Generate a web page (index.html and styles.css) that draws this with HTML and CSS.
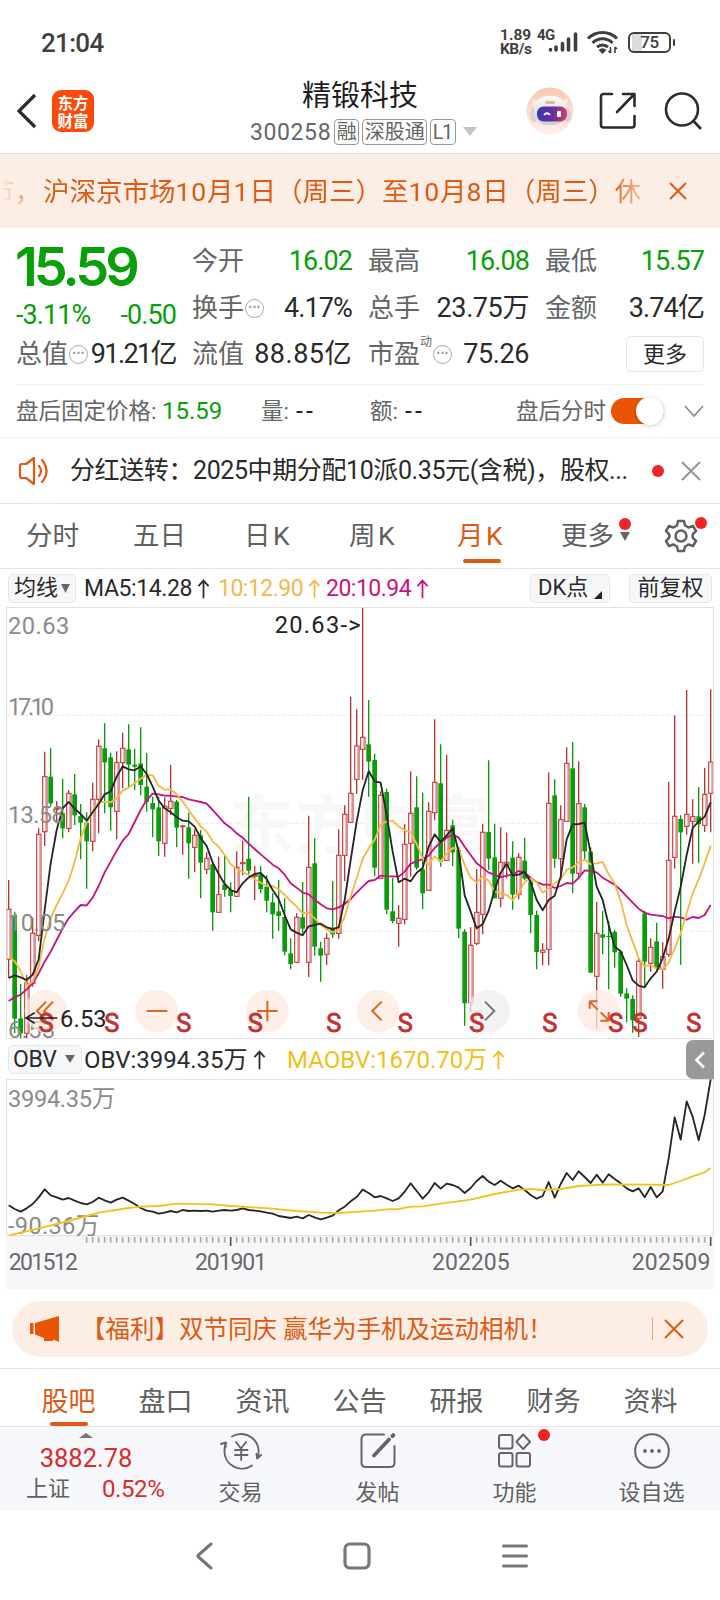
FILE: index.html
```html
<!DOCTYPE html>
<html lang="zh-CN">
<head>
<meta charset="utf-8">
<title>精锻科技 300258</title>
<link rel="stylesheet" href="styles.css">
</head>
<body>
<div class="screen">
  <div class="status">
    <span class="clock">21:04</span>
    <span class="speed"><b>1.89</b><b>KB/s</b></span>
    <span class="net">4G</span>
    <svg class="signal" width="31" height="22" viewBox="0 0 31 22"><g fill="none" stroke="#3f3f3f" stroke-width="3.6" stroke-linecap="round"><path d="M2.5 18.5v.5M8 16v3M14.500 12.500V19M20.500 8v11M27.500 3v16"/></g></svg>
    <svg class="wifi" width="34" height="24" viewBox="0 0 34 24"><g fill="none" stroke="#3f3f3f" stroke-width="3"><path d="M2 8.500a20.500 20.500 0 0 1 29 0M6.500 13a14 14 0 0 1 20 0M11 17.200a8 8 0 0 1 11 0"/></g><path d="M12.500 20q4-3.500 8 0L16.500 24z" fill="#3f3f3f"/><path d="M24.500 17v6m-2-2 2 2M29 23v-6m2 2-2-2" stroke="#3f3f3f" stroke-width="1.600" fill="none"/></svg>
    <span class="battery">75</span>
  </div>

  <div class="header">
    <svg class="back" width="22" height="36" viewBox="0 0 22 36"><path d="M19 2 3 18l16 16" fill="none" stroke="#2c2c2c" stroke-width="3.200"/></svg>
    <div class="logo"><span>东方</span><span>财富</span></div>
    <div class="title">
      <div class="name">精锻科技</div>
      <div class="code"><span class="num">300258</span><i>融</i><i>深股通</i><i class="lv">L1</i><svg width="14" height="10"><path d="M0 0h14L7 9z" fill="#c4c4c4"/></svg></div>
    </div>
    <svg class="robot" width="48" height="48" viewBox="0 0 48 48">
      <defs><linearGradient id="halo" x2="0" y2="1"><stop offset="0" stop-color="#fbc8ac"/><stop offset="1" stop-color="#fff1ea"/></linearGradient>
      <linearGradient id="visor"><stop offset="0" stop-color="#3b36b0"/><stop offset=".55" stop-color="#6a2f9e"/><stop offset="1" stop-color="#d8405e"/></linearGradient>
      <linearGradient id="shell" x2="0" y2="1"><stop offset="0" stop-color="#fafafa"/><stop offset="1" stop-color="#cfcfd6"/></linearGradient></defs>
      <circle cx="24" cy="24" r="23.500" fill="url(#halo)"/>
      <path d="M6 12l7 2-5 8zM42 12l-7 2 5 8z" fill="#f1eeee"/>
      <ellipse cx="8" cy="28" rx="4" ry="7" fill="#d4d3da"/><ellipse cx="41" cy="28" rx="4" ry="7" fill="#d4d3da"/>
      <rect x="8" y="9" width="32" height="29" rx="13" fill="url(#shell)"/>
      <rect x="19" y="14" width="10" height="3" rx="1.500" fill="#e8b48f"/>
      <rect x="11" y="19.500" width="30" height="15" rx="6.500" fill="url(#visor)"/>
      <path d="M18 28q3-3.500 6 0" fill="none" stroke="#fff" stroke-width="1.800"/><rect x="31" y="24" width="4" height="6" rx="1" fill="#fff"/>
    </svg>
    <svg class="share" width="38" height="38" viewBox="0 0 38 38"><g fill="none" stroke="#2c2c2c" stroke-width="2.600" stroke-linecap="round" stroke-linejoin="round"><path d="M13 2H4.500Q2 2 2 4.500V33q0 2.500 2.500 2.500H33q2.500 0 2.500-2.500V24M24 2h11.500v12M35 2.500 18 20"/></g></svg>
    <svg class="search" width="38" height="38" viewBox="0 0 38 38"><circle cx="18" cy="17.500" r="16" fill="none" stroke="#2c2c2c" stroke-width="2.600"/><path d="m29 28.500 8 8.500" stroke="#2c2c2c" stroke-width="2.600"/></svg>
  </div>

  <div class="notice">
    <div class="marquee"><span class="lead">节，</span><span class="run">沪深京市场<em class="mq">10</em>月<em class="mq">1</em>日（周三）至<em class="mq">10</em>月<em class="mq">8</em>日（周三）休</span></div>
    <svg width="18" height="18"><path d="M1 1l16 16M17 1 1 17" stroke="#dc5a14" stroke-width="2"/></svg>
  </div>

  <div class="quote">
    <div class="price">
      <div class="last">15.59</div>
      <div class="chg"><span>-3.11%</span><span>-0.50</span></div>
    </div>
    <div class="cell c2"><span>今开</span><b class="g">16.02</b></div>
    <div class="cell c3"><span>最高</span><b class="g">16.08</b></div>
    <div class="cell c4"><span>最低</span><b class="g">15.57</b></div>
    <div class="cell c2 r2"><span>换手</span><i class="tip">···</i><b class="n">4.17%</b></div>
    <div class="cell c3 r2"><span>总手</span><b>23.75万</b></div>
    <div class="cell c4 r2"><span>金额</span><b class="n">3.74亿</b></div>
    <div class="cell c1 r3"><span>总值</span><i class="tip">···</i><b>91.21亿</b></div>
    <div class="cell c2 r3"><span>流值</span><b class="w">88.85亿</b></div>
    <div class="cell c3 r3"><span>市盈</span><sup>动</sup><i class="tip">···</i><b>75.26</b></div>
    <div class="more r3">更多</div>
  </div>

  <div class="after">
    <span class="a1">盘后固定价格:</span><span class="a2">15.59</span><span class="a3">量:</span><span class="dash">--</span><span class="a4">额:</span><span class="dash">--</span>
    <span class="a5">盘后分时</span><span class="toggle"></span>
    <svg width="20" height="13"><path d="M1 1l9 10 9-10" fill="none" stroke="#8a8a8a" stroke-width="1.600"/></svg>
  </div>

  <div class="news">
    <svg width="34" height="28" viewBox="0 0 34 28"><g fill="none" stroke="#dc5a14" stroke-width="2.200" stroke-linejoin="round" stroke-linecap="round"><path d="M2 9v10q0 2 2 2h4l8 6V1L8 7H4Q2 7 2 9zM21 9q4 5 0 10M24 3q9 11 0 22"/></g></svg>
    <span class="txt">分红送转：2025中期分配10派0.35元(含税)，股权...</span>
    <span class="dot"></span>
    <svg class="x" width="20" height="20"><path d="M1 1l18 18M19 1 1 19" stroke="#949494" stroke-width="2"/></svg>
  </div>

  <div class="periods">
    <span>分时</span><span>五日</span><span class="kk">日<em>K</em></span><span class="kk">周<em>K</em></span><span class="kk on">月<em>K</em></span><span class="pm">更多<svg width="10" height="9"><path d="M0 0h10L5 9z" fill="#666"/></svg><u class="dot"></u></span>
    <span class="gear"><svg width="34" height="34" viewBox="0 0 34 34"><g fill="none" stroke="#606060" stroke-width="2.500" stroke-linejoin="round"><path d="M14 2h6l1 4.500 3.500 2 4.500-1.500 3 5-3.300 3.300v3.400L32 22l-3 5-4.500-1.500-3.500 2L20 32h-6l-1-4.500-3.500-2L5 27l-3-5 3.300-3.300v-3.400L2 12l3-5 4.500 1.500 3.500-2z"/><circle cx="17" cy="17" r="5.500"/></g></svg><u class="dot"></u></span>
  </div>

  <div class="ind">
    <span class="chip k1">均线<svg width="9" height="9"><path d="M0 0h9L4.500 9z" fill="#666"/></svg></span>
    <span class="m1">MA5:14.28<svg class="up" viewBox="0 0 14 22"><path d="M7 21V2M1.500 8 7 2l5.500 6"/></svg></span>
    <span class="m2">10:12.90<svg class="up" viewBox="0 0 14 22"><path d="M7 21V2M1.500 8 7 2l5.500 6"/></svg></span>
    <span class="m3">20:10.94<svg class="up" viewBox="0 0 14 22"><path d="M7 21V2M1.500 8 7 2l5.500 6"/></svg></span>
    <span class="chip k2">DK点<svg width="8" height="8"><path d="M8 0v8H0z" fill="#222"/></svg></span>
    <span class="chip k3">前复权</span>
  </div>

  <svg class="kline" id="kline" viewBox="0 21 2160 1296"></svg>

  <div class="obvbar">
    <span class="chip">OBV<svg width="10" height="8"><path d="M0 0h10L5 8z" fill="#666"/></svg></span>
    <span class="o1">OBV:3994.35万<svg class="up" viewBox="0 0 14 22"><path d="M7 21V2M1.500 8 7 2l5.500 6"/></svg></span>
    <span class="o2">MAOBV:1670.70万<svg class="up" viewBox="0 0 14 22"><path d="M7 21V2M1.500 8 7 2l5.500 6"/></svg></span>
    <span class="side"><svg width="12" height="18"><path d="M10 1.500 2.500 9l7.500 7.500" fill="none" stroke="#fff" stroke-width="2.600"/></svg></span>
  </div>
  <svg class="obv" id="obv" viewBox="0 147 2160 630"></svg>

  <div class="promo">
    <svg width="30" height="26" viewBox="0 0 30 26"><path d="M0 7h3.500v11H0zM5 7 29 0v26l-6-2.500v1.500h-9v-3L5 18.500z" fill="#ea5504"/></svg>
    <span class="txt">【福利】双节同庆 赢华为手机及运动相机！</span>
    <i></i>
    <svg width="20" height="20"><path d="M1 1l18 18M19 1 1 19" stroke="#dc5a14" stroke-width="2"/></svg>
  </div>

  <div class="tabs"><span class="on">股吧</span><span>盘口</span><span>资讯</span><span>公告</span><span>研报</span><span>财务</span><span>资料</span></div>

  <div class="bottom">
    <div class="index">
      <svg class="caret" width="14" height="5"><path d="M0 5 7 0l7 5z" fill="#777"/></svg>
      <div class="v">3882.78</div>
      <div class="s"><span>上证</span><b>0.52%</b></div>
    </div>
    <div class="act"><svg width="42" height="38" viewBox="0 0 42 38"><g fill="none" stroke="#666" stroke-width="1.900" stroke-linecap="round" stroke-linejoin="round"><path d="M12 4.500A17.500 17.500 0 0 1 38 24l-.8 2.500M41.200 23l-4 3.500-.7-4.500M32 33.500A17.500 17.500 0 0 1 4.500 18q0-4 1.500-7.500M1 12l5-1.500-.5 5"/><path d="m16 10 5 6.500 5-6.500M15 18h12.500M15 23h12.500M21.200 17v11"/></g></svg><span>交易</span></div>
    <div class="act"><svg width="38" height="38" viewBox="0 0 38 38"><g fill="none" stroke="#666" stroke-linecap="round"><path d="M25 2.500H7Q2.500 2.500 2.500 7v23.500q0 4.500 4.500 4.500h24q4.500 0 4.500-4.500V14" stroke-width="2"/><path d="M15 23.500 30 7.500" stroke-width="3.800"/><path d="m33.500 4 .8-.8" stroke-width="4"/></g></svg><span>发帖</span></div>
    <div class="act"><svg width="36" height="36" viewBox="0 0 36 36"><g fill="none" stroke="#666" stroke-width="2"><rect x="2" y="2" width="13.500" height="13.500" rx="2"/><rect x="2" y="20" width="13.500" height="13.500" rx="2"/><rect x="19.500" y="20" width="13.500" height="13.500" rx="2"/><path d="M26.200 1.500 33 8.800l-6.800 7.300-6.800-7.300z" stroke-linejoin="round"/></g></svg><u class="dot"></u><span>功能</span></div>
    <div class="act"><svg width="38" height="38" viewBox="0 0 38 38"><circle cx="19" cy="19" r="16.800" fill="none" stroke="#666" stroke-width="2"/><g fill="#666"><circle cx="12" cy="19" r="1.900"/><circle cx="19" cy="19" r="1.900"/><circle cx="26" cy="19" r="1.900"/></g></svg><span>设自选</span></div>
  </div>

  <div class="nav">
    <svg width="20" height="30" viewBox="0 0 20 30"><path d="M17 3 4.500 14q-1.200 1 0 2L17 27" fill="none" stroke="#777" stroke-width="3" stroke-linecap="round"/></svg>
    <svg width="30" height="30" viewBox="0 0 30 30"><rect x="3" y="3" width="24" height="24" rx="5" fill="none" stroke="#777" stroke-width="3.200"/></svg>
    <svg width="28" height="30" viewBox="0 0 28 30"><path d="M2.500 5h23M2.500 15h23M2.500 25h23" stroke="#777" stroke-width="3" stroke-linecap="round"/></svg>
  </div>
</div>
<script src="chart.js"></script>
</body>
</html>
```
FILE: chart.js
```js
// Monthly candles, 2015-12 to 2025-09: direction, high, body top, body bottom, low (chart units).
const candles = `R 840 928 1078 1134;G 935 945 1256 1300;G 1152 1255 1300 1318;R 1125 1150 1300 1315;R 953 1000 1150 1160;R 685 703 1006 1024;R 455 530 695 738;G 444 530 610 618;R 603 625 628 668;G 536 640 685 715;R 571 580 685 697;G 522 583 646 675;G 612 648 668 778;G 637 668 724 866;R 548 598 724 754;R 418 439 598 700;G 370 445 487 640;G 458 472 622 692;R 454 488 634 718;R 398 445 488 565;G 373 448 494 560;G 446 494 500 570;G 382 490 555 586;G 459 560 606 635;G 590 609 628 712;G 590 622 724 768;R 592 619 730 770;R 495 604 625 645;G 600 605 683 742;R 675 678 680 764;G 638 682 730 836;R 688 706 742 817;G 690 706 788 895;R 757 775 808 823;G 790 793 937 992;R 770 884 937 937;G 768 853 870 890;G 847 870 888 937;R 754 802 889 889;
R 722 788 791 826;G 590 776 812 823;R 797 826 829 900;G 799 824 867 880;G 826 860 902 937;G 880 907 943 1016;G 840 934 948 992;G 895 951 1055 1066;G 1015 1060 1092 1108;R 940 952 1087 1090;G 846 952 986 1000;R 647 802 1087 1131;G 715 790 1040 1067;G 1025 1045 1067 1145;R 1000 1015 1063 1095;G 843 985 1003 1015;R 688 766 1000 1016;R 616 643 766 843;R 290 580 667 667;R 328 438 538 582;R 22 412 448 540;G 300 433 485 590;G 461 480 803 829;R 574 586 835 835;G 566 576 929 943;G 833 934 963 970;R 916 955 970 1040;R 673 733 958 973;R 514 640 730 830;G 529 622 803 809;G 578 808 880 928;R 607 634 871 871;R 358 547 638 661;G 433 550 785 800;R 464 691 781 781;G 659 676 757 799;G 740 750 986 1015;G 988 995 1210 1277;R 982 1036 1208 1235;R 806 937 1030 1036;
R 672 697 943 1003;G 481 696 776 810;G 671 772 895 895;R 682 787 895 922;R 698 787 796 835;G 724 773 884 929;R 760 772 883 898;G 713 782 836 840;G 840 845 945 1000;G 932 945 1056 1108;R 1030 1051 1057 1096;R 517 610 1048 1096;G 538 586 776 803;R 616 659 776 830;R 442 490 664 664;G 426 505 821 880;R 484 611 820 835;G 612 622 754 779;G 742 755 1118 1118;R 905 1000 1129 1286;G 932 1003 1013 1063;G 963 1008 1010 1168;G 990 996 1057 1103;G 1052 1055 1181 1190;G 1165 1180 1196 1267;G 1186 1197 1261 1298;R 1075 1084 1255 1311;G 932 940 1085 1160;R 1015 1042 1090 1115;G 968 1024 1105 1110;R 1027 1070 1108 1166;R 545 781 1063 1070;R 346 649 772 806;G 646 657 697 1094;R 270 643 679 704;R 598 650 664 791;G 561 649 673 788;R 503 583 676 696;R 268 486 580 697`
  .split(';').map(s => s.trim().split(' '));

const ma5 = [1134,1126,1132,1140,1124,1078,930,790,690,625,606,626,642,662,637,612,583,574,530,499,508,511,499,522,560,602,625,637,651,662,664,680,714,738,788,822,852,870,877,
850,832,822,819,837,870,897,945,988,998,1006,979,975,971,982,987,982,900,780,665,571,514,544,548,645,755,847,836,844,818,804,740,703,726,706,685,755,886,935,985,
973,932,870,818,791,826,824,815,846,900,931,900,887,830,718,673,672,668,760,860,900,975,1040,1054,1095,1141,1157,1162,1135,1115,1075,1015,935,860,765,684,664,650,607];
const ma10 = [1072,1084,1113,1156,1145,1100,1015,955,915,880,842,785,715,668,634,605,606,607,596,572,563,549,536,524,526,557,569,569,583,605,630,655,679,695,724,740,765,793,806,
816,825,838,848,858,858,868,885,903,920,939,939,955,975,988,997,990,950,889,835,777,745,720,674,665,662,680,690,697,732,775,794,769,785,761,744,746,795,833,847,
830,842,875,880,885,900,880,845,836,846,878,865,850,838,809,802,787,779,793,790,786,823,850,903,975,1025,1075,1100,1095,1105,1109,1088,1045,1000,940,880,838,790,737];
const ma20 = [1203,1192,1184,1168,1150,1120,1085,1055,1020,985,955,934,915,916,893,858,817,785,752,722,702,666,630,600,581,583,587,587,590,591,598,602,606,611,630,650,670,683,700,
713,731,747,763,778,794,805,824,850,863,878,883,899,913,925,928,922,912,897,878,860,843,840,827,829,829,830,815,791,784,777,767,744,727,713,704,713,740,765,790,
803,818,824,832,827,824,813,817,834,846,854,854,864,858,849,851,834,811,813,817,833,844,854,870,889,908,926,938,944,946,948,955,950,952,959,951,954,945,915];
const obv = [526,537,545,535,522,502,478,496,502,509,504,512,519,523,516,503,511,518,509,503,512,522,534,542,545,551,548,543,547,540,543,542,543,542,545,542,540,542,540,535,540,542,544,548,551,558,561,564,560,565,555,562,568,563,557,541,530,514,501,
479,489,502,498,505,513,505,485,460,483,506,487,459,476,461,465,473,489,474,453,438,455,465,452,464,475,467,480,495,506,498,456,503,462,429,450,424,441,459,434,458,433,447,460,475,484,475,502,471,502,484,385,262,329,214,260,331,255,148];
const maobv = '28,616 116,595 206,573 296,548 386,534 422,530 476,528 530,521 638,523 692,528 728,530 818,536 890,543 962,548 1016,549 1080,545 1124,542 1160,538 1196,537 1232,530 1268,529 1322,521 1412,509 1484,492 1556,479 1592,477 1628,480 1682,477 1736,468 1826,463 1952,464 2006,465 2042,453 2078,439 2114,427 2132,414';

const xAt = i => 26 + 18 * i;
const line = (vals, cls) =>
  `<polyline class="${cls}" points="${vals.map((v, i) => xAt(i) + ',' + v).join(' ')}"/>`;
const label = (x, y, w, text, cls) =>
  `<text x="${x}" y="${y}" textLength="${w}" class="${cls}">${text}</text>`;

let k = '';
[346, 670, 994].forEach(y => k += `<path class="grid" d="M20 ${y}H2140"/>`);
'东方财富'.split('').forEach((c, i) => k += `<text class="mark" x="${690 + i * 196}" y="745">${c}</text>`);
candles.forEach(([dir, h, t, b, l], i) => {
  const x = xAt(i);
  if (dir === 'G') {
    k += `<path class="gw" d="M${x} ${h}V${l}"/><rect class="gb" x="${x - 7}" y="${t}" width="14" height="${Math.max(3, b - t)}"/>`;
  } else {
    k += `<path class="rw" d="M${x} ${h}V${t}M${x} ${b}V${l}"/><rect class="rb" x="${x - 6}" y="${t}" width="13" height="${Math.max(1, b - t)}"/>`;
    if (b - t > 12) k += `<path class="rs" d="M${x + 4} ${+t + 2}V${b - 2}"/>`;
  }
});
k += line(ma20, 'l20') + line(ma10, 'l10') + line(ma5, 'l5');
k += label(24, 102, 184, '20.63', 'ax') + label(24, 346, 138, '17.10', 'ax') + label(24, 670, 170, '13.58', 'ax')
   + label(24, 994, 172, '10.05', 'ax') + label(24, 1313, 142, '6.53', 'ax');
[138, 470, 802, 1134, 1466, 1797].forEach((x, i) => k += `<circle class="${i === 4 ? 'btn off' : 'btn'}" cx="${x}" cy="1233" r="64"/>`);
k += `<g class="ico"><path d="m138 1205-27 28 27 28M159 1205l-27 28 27 28M440 1233h62M771 1233h62M802 1202v62M1145 1205l-28 28 28 28"/>
<path d="M1769 1226v-22M1768 1204h24M1769 1205l24 24M1826 1236v26M1827 1262h-26M1826 1261l-24-24"/><path d="m1455 1205 28 28-28 28" style="stroke:#777"/></g>`;
[138, 335, 551, 766, 1001, 1216, 1430, 1649, 1847, 1920, 2081].forEach(x => k += `<text class="sell" x="${x}" y="1297">S</text>`);
k += label(824, 98, 258, '20.63-&gt;', 'hl') + label(180, 1282, 140, '6.53', 'hl')
   + '<path d="M172 1254H78M104 1238 78 1254l26 16" class="arrow"/>';
k += '<path class="frame" d="M20 22H2140V1316H20z"/>';
document.getElementById('kline').innerHTML = k;

let o = '<rect x="18" y="617" width="2124" height="160" fill="#f7f7fa"/>';
for (let i = 13; i < 118; i++) {
  const major = i === 37 || i === 77 || i === 117;
  o += `<path class="${major ? 'tick major' : 'tick'}" d="M${xAt(i)} 621V${major ? 648 : 638}"/>`;
}
o += '<path class="frame" d="M20 148H2140V617H20z"/>';
o += label(24, 232, 322, '3994.35万', 'ax') + label(24, 611, 274, '-90.36万', 'ax');
o += line(obv, 'lobv') + `<polyline class="lmaobv" points="${maobv}"/>`;
o += label(26, 719, 208, '201512', 'dt') + label(585, 719, 216, '201901', 'dt')
   + label(1296, 719, 233, '202205', 'dt') + label(1895, 719, 236, '202509', 'dt');
document.getElementById('obv').innerHTML = o;
```
FILE: styles.css
```css
* { box-sizing: border-box; }
body { margin: 0; background: #fff; }
b, i, u, em { font-weight: 400; font-style: normal; text-decoration: none; }
svg { display: block; flex: none; }
.screen {
  width: 720px; height: 1600px; overflow: hidden; background: #fff;
  font-family: Roboto, "Noto Sans CJK SC", sans-serif; color: #2a2a2a; line-height: 1; white-space: nowrap;
}
.dot { width: 12px; height: 12px; border-radius: 50%; background: #f02424; }
.up { display: inline-block; width: 13px; height: 22px; fill: none; stroke: currentColor; stroke-width: 1.9; }

.status { height: 76px; display: flex; align-items: center; padding: 8px 45px 0 41px; color: #3f3f3f; }
.clock { font-size: 26px; font-weight: 500; letter-spacing: -.7px; flex: 1; padding-top: 1px; }
.speed { display: grid; font-size: 15.500px; width: 37px; }
.speed b { font-weight: 700; line-height: 14px; }
.speed b + b { letter-spacing: -.5px; }
.net { font-size: 15px; font-weight: 700; align-self: flex-start; margin: 20px 0 0; width: 11px; letter-spacing: -.5px; }
.signal { margin-top: 0; margin-right: 7px; }
.wifi { margin-right: 8px; }
.battery {
  width: 43px; height: 21px; border: 2.500px solid #3f3f3f; border-radius: 6px; margin-right: 4px;
  font-size: 17px; font-weight: 500; display: flex; justify-content: center; align-items: center; position: relative;
  background: linear-gradient(90deg, #fff 2px, #ddd 2px 12px, #fff 12px); letter-spacing: -.5px;
}
.battery::after { content: ""; position: absolute; right: -6px; top: 5px; width: 2.500px; height: 7px; background: #3f3f3f; border-radius: 1px; }

.header { height: 78px; border-bottom: 1.500px solid #dedede; display: flex; align-items: center; padding: 0 18px 7px 16px; }
.logo {
  width: 42px; height: 42px; margin-left: 14px; border-radius: 9px; background: #fb4a0c; color: #fff;
  font: 700 15.500px/18px "Noto Sans CJK SC", sans-serif; display: grid; align-content: center; justify-content: center;
}
.title { margin-left: 156px; width: 220px; height: 66px; }
.name { font-size: 29px; line-height: 36px; text-align: center; color: #1f1f1f; }
.code { display: flex; align-items: center; height: 30px; color: #666; font-size: 23px; margin-top: 3px; gap: 3px; }
.code .num { width: 82px; letter-spacing: .6px; }
.code i { border: 1px solid #999; border-radius: 4px; height: 26px; line-height: 24px; padding: 0 1.500px; font-size: 20px; }
.code .lv { letter-spacing: -1.500px; padding-right: 3px; }
.code svg { margin-left: 4px; }
.robot { margin-left: 56px; }
.share { margin-left: 25px; }
.search { margin-left: auto; }

.notice { height: 74px; background: #fdeee5; color: #dc5a14; display: flex; align-items: center; padding-right: 33px; justify-content: space-between; }
.marquee { width: 646px; overflow: hidden; display: flex; font-size: 26.500px; line-height: 40px; padding-top: 1px;
  -webkit-mask-image: linear-gradient(90deg, transparent, #000 50px 610px, transparent 655px); mask-image: linear-gradient(90deg, transparent, #000 50px 610px, transparent 655px); }
.lead { margin-left: -12px; width: 55px; }
.mq { letter-spacing: .9px; }

.quote { height: 156px; display: grid; grid-template: 48px 46px 46px / 160px 160px 161px 159px; column-gap: 16px; padding: 9px 15px 0 16px; align-items: center; }
.price { grid-area: 1 / 1 / 3 / 2; align-self: start; color: #08a008; }
.last { font: 600 54px/54px Inter, sans-serif; letter-spacing: -4px; margin-top: 3px; margin-left: -1px; }
.chg { display: flex; justify-content: space-between; font-size: 27px; margin-top: 8px; letter-spacing: -.9px; }
.cell { display: flex; align-items: center; font-size: 26px; color: #666; }
.cell b { margin-left: auto; color: #2a2a2a; font-size: 27px; letter-spacing: -.4px; }
.cell b.g { color: #08a008; letter-spacing: -.9px; }
.cell b.n { letter-spacing: -.9px; }
.c1 { grid-column: 1; }
.c2 { grid-column: 2; }
.c3 { grid-column: 3; }
.c4 { grid-column: 4; }
.cell, .more { grid-row: 1; }
.r2 { grid-row: 2; }
.r3 { grid-row: 3; }
.tip { width: 19px; height: 19px; border: 1.500px solid #aaa; border-radius: 50%; font: 700 14px/15px "Liberation Sans", sans-serif; text-align: center; color: #999; margin-left: 1px; letter-spacing: -.5px; }
.c3 sup { font-size: 12px; align-self: flex-start; margin-top: -5px; }
.c1 b { letter-spacing: -1.600px; }
.cell b.w { letter-spacing: .5px; }
.more { grid-column: 4; justify-self: end; width: 78px; height: 36px; border: 1px solid #e4e6e8; border-radius: 5px; font-size: 22px; line-height: 35px; text-align: center; }

.after { height: 53px; margin: 0 16px; border-top: 1px solid #eee; display: flex; align-items: center; font-size: 22.500px; color: #666; }
.a1 { width: 146px; }
.a2 { width: 99px; font-size: 24px; color: #08a008; }
.a3, .a4 { width: 35px; }
.dash { width: 74px; color: #2a2a2a; font-size: 25px; letter-spacing: 3px; }
.a5 { margin-left: 37px; width: 95px; }
.toggle { width: 53px; height: 26px; border-radius: 13px; background: #ea5504; position: relative; }
.toggle::after { content: ""; position: absolute; right: 0; top: -1px; width: 28px; height: 28px; border-radius: 50%; background: #fff; box-shadow: 0 1px 4px rgba(0,0,0,.2); }
.after svg { margin-left: auto; }

.news { height: 67px; border-top: 1px solid #eee; border-bottom: 1.500px solid #e4e4e4; display: flex; align-items: center; padding: 0 19px 0 18px; }
.news .txt { font-size: 25px; margin-left: 18px; width: 558px; letter-spacing: -.4px; }
.news .dot { margin: 0 auto 0 24px; }

.periods { height: 65px; border-bottom: 1.500px solid #e4e4e4; display: grid; grid-template-columns: 107px 111px 105px 108px 104px 103px 36px; justify-content: start; padding-left: 26px; font-size: 26.500px; color: #606060; align-items: center; }
.periods span { display: flex; align-items: center; height: 63px; position: relative; }
.kk em { margin-left: 2.500px; }
.periods .on { color: #dc5a14; }
.periods .on::after { content: ""; position: absolute; left: 6px; bottom: 5px; width: 38px; height: 4px; border-radius: 2px; background: #dc5a14; }
.pm svg { margin-left: 6px; }
.pm .dot { position: absolute; left: 58px; top: 13px; }
.gear .dot { position: absolute; left: 31px; top: 12px; }

.ind { height: 38px; display: flex; align-items: center; padding: 0 8px; font-size: 23px; }
.chip { height: 29px; border: 1px solid #e4e6e8; border-radius: 5px; background: #f6f7f9; display: flex; align-items: center; color: #2a2a2a; font-size: 22px; }
.ind span:not(.chip), .obvbar span:not(.chip) { display: flex; align-items: center; gap: 5px; padding-top: 1px; }
.k1 { width: 68px; padding-left: 5px; gap: 3px; }
.ind .m1 { margin-left: 8px; width: 134px; letter-spacing: -.4px; }
.m2 { width: 108px; color: #f3b94e; letter-spacing: -.5px; }
.m3 { color: #c8137f; letter-spacing: -.5px; }
.k2 { margin-left: auto; width: 80px; padding-left: 7px; gap: 6px; }
.k2 svg { margin-top: 14px; }
.k3 { width: 83px; margin-left: 19px; justify-content: center; }

.kline, .obv { width: 720px; overflow: hidden; font-family: Roboto, "Noto Sans CJK SC", sans-serif; }
.kline { height: 432px; }
.obv { height: 210px; }
.grid { stroke: #e9e9e9; stroke-width: 3; stroke-dasharray: 12 6; }
.mark { font: 700 192px "Noto Sans CJK SC", sans-serif; fill: #f8f8f8; }
.gw { stroke: #0d970d; stroke-width: 4; }
.gb { fill: #0a9c0a; }
.rw { stroke: #b73434; stroke-width: 4; fill: none; }
.rb { stroke: #c64040; stroke-width: 3.500; fill: #fff; }
.rs { stroke: #e08e8e; stroke-width: 4; }
.l5, .l10, .l20, .lobv, .lmaobv { fill: none; stroke-width: 5.500; stroke-linejoin: round; }
.l5, .lobv { stroke: #262626; }
.l10 { stroke: #f6b947; }
.l20 { stroke: #c8137f; }
.lmaobv { stroke: #efc41c; }
.ax { font-size: 71px; fill: #8b8b8b; }
.dt { font-size: 69px; fill: #6a6a6a; }
.hl { font-size: 71px; fill: #222; }
.arrow { fill: none; stroke: #222; stroke-width: 5; }
.btn { fill: #fdeae0; fill-opacity: .75; }
.btn.off { fill: #eee; }
.ico path { fill: none; stroke: #e0641e; stroke-width: 6; }
.sell { font-size: 76px; font-weight: 400; fill: #c43232; stroke: #c43232; stroke-width: 2.500; text-anchor: middle; }
.frame { fill: none; stroke: #dedede; stroke-width: 3; }
.tick { stroke: #aaa; stroke-width: 5; }
.tick.major { stroke: #555; stroke-width: 5; }

.obvbar { height: 40px; display: flex; align-items: center; padding: 0 6px 0 8px; font-size: 24px; }
.obvbar .chip { width: 74px; padding-left: 4px; gap: 8px; font-size: 23px; letter-spacing: -.3px; }
.obvbar .o1 { margin-left: 2px; width: 203px; gap: 8px; }
.o2 { color: #efc01c; }
.obvbar .side { margin-left: auto; width: 28px; height: 39px; background: #999; border-radius: 7px 0 0 7px; justify-content: center; }

.promo { height: 56px; margin: 12px 12px 0; border-radius: 28px; background: #fdeee5; color: #dc5a14; display: flex; align-items: center; padding: 0 24px 0 18px; }
.promo .txt { font-size: 24.500px; margin-left: 21px; flex: 1; padding-top: 2px; }
.promo i { width: 1px; height: 22px; background: #eba27c; margin-right: 11px; }

.tabs { height: 59px; margin-top: 11px; border-top: 1.500px solid #e4e4e4; border-bottom: 1px solid #e4e4e4; display: grid; grid-template-columns: repeat(7, 97px); padding-left: 20px; justify-content: start; font-size: 27px; color: #606060; text-align: center; line-height: 67px; }
.tabs span { position: relative; height: 57px; }
.tabs .on { color: #dc5a14; }
.tabs .on::after { content: ""; position: absolute; left: 30px; bottom: 0; width: 38px; height: 4px; border-radius: 2px; background: #dc5a14; }

.bottom { height: 84px; background: #f7f8fb; display: grid; grid-template-columns: 172px repeat(4, 137px); }
.index { display: grid; justify-items: center; align-content: start; color: #da2a2a; position: relative; }
.caret { margin-top: 6px; }
.v { font-size: 25.500px; margin-top: 8px; }
.s { display: flex; gap: 32px; align-items: center; justify-self: start; margin: 4px 0 0 26px; font-size: 22px; }
.s span { color: #606060; padding-top: 1px; }
.s b { font-size: 24px; letter-spacing: -.4px; padding-top: 1px; }
.act { display: flex; flex-direction: column; align-items: center; color: #606060; font-size: 22px; position: relative; padding-top: 5px; }
.act svg { height: 38px; }
.act span { margin-top: 12px; }
.act .dot { position: absolute; left: 92px; top: 2px; }

.nav { height: 89px; display: grid; grid-template-columns: 20px 30px 28px; justify-content: start; align-items: center; column-gap: 128px; padding-left: 194px; }
.nav { grid-template-columns: 20px 31px 28px; }
```
